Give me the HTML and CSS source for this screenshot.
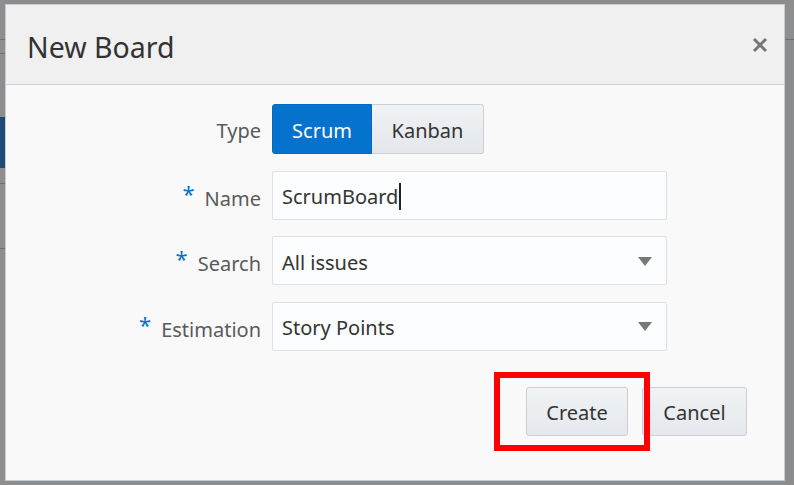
FILE: index.html
```html
<!DOCTYPE html>
<html>
<head>
<meta charset="utf-8">
<link rel="stylesheet" href="styles.css">
</head>
<body>
<div class="screen">
  <div class="strip strip-left">
    <div class="seg seg-a"></div>
    <div class="seg-line"></div>
    <div class="seg seg-b"></div>
    <div class="seg-line"></div>
    <div class="seg seg-c"></div>
    <div class="seg seg-blue"></div>
    <div class="seg seg-d"></div>
    <div class="seg-line"></div>
    <div class="seg seg-e"></div>
    <div class="seg-line"></div>
    <div class="seg seg-f"></div>
  </div>
  <div class="dialog-wrap">
    <div class="dialog">
      <div class="dialog-header">
        <h1 class="dialog-title">New Board</h1>
        <button class="close-btn" aria-label="Close">
          <svg width="16" height="16" viewBox="0 0 16 16"><path d="M2 2 L14 14 M14 2 L2 14" stroke="#767676" stroke-width="3" stroke-linecap="butt"/></svg>
        </button>
      </div>
      <div class="dialog-body">
        <div class="form">
          <div class="label">Type</div>
          <div class="seg-control">
            <button class="seg-btn seg-active">Scrum</button>
            <button class="seg-btn">Kanban</button>
          </div>

          <div class="label"><span class="req">*</span>Name</div>
          <div class="field"><span class="value">ScrumBoard</span><span class="caret"></span></div>

          <div class="label"><span class="req">*</span>Search</div>
          <div class="field select"><span class="value">All issues</span><span class="arrow"></span></div>

          <div class="label"><span class="req">*</span>Estimation</div>
          <div class="field select"><span class="value">Story Points</span><span class="arrow"></span></div>
        </div>
        <div class="footer">
          <div class="highlight-wrap">
            <button class="btn">Create</button>
            <div class="highlight"></div>
          </div>
          <button class="btn">Cancel</button>
        </div>
      </div>
    </div>
  </div>
  <div class="strip strip-right">
    <div class="seg seg-r1"></div>
    <div class="seg-line"></div>
  </div>
</div>
</body>
</html>
```
FILE: styles.css
```css
* { box-sizing: border-box; }
html, body { margin: 0; padding: 0; }
body {
  width: 794px;
  height: 485px;
  overflow: hidden;
  background: #8c8c8c;
  font-family: "Noto Sans", "Open Sans", sans-serif;
}
.screen {
  display: flex;
  width: 794px;
  height: 485px;
}
.strip {
  display: flex;
  flex-direction: column;
}
.strip-left { width: 5px; }
.strip-right { width: 9px; }
.seg { background: #8e8e8e; }
.seg-line { height: 1px; background: #6f6f6f; }
.seg-a { height: 39px; }
.seg-b { height: 13px; }
.seg-c { height: 63px; }
.seg-blue { height: 51px; background: #1d4a78; }
.seg-d { height: 15px; }
.seg-e { height: 64px; }
.seg-f { flex: 1; }
.seg-r1 { height: 39px; }

.dialog-wrap {
  width: 780px;
  padding: 4px 0 4px 0;
}
.dialog {
  height: 477px;
  border: 1px solid #c4ccd6;
  background: #f9f9f9;
  display: flex;
  flex-direction: column;
}
.dialog-header {
  height: 80px;
  background: #f0f0f0;
  border-bottom: 1px solid #c9d1db;
  display: flex;
  align-items: center;
  justify-content: space-between;
  padding: 4px 16px 0 21px;
}
.dialog-title {
  margin: 0;
  font-weight: 400;
  font-size: 28.5px;
  color: #333333;
  letter-spacing: 0;
}
.close-btn {
  border: 0;
  background: transparent;
  padding: 0;
  width: 16px;
  height: 16px;
  display: flex;
  margin-top: -4px;
}
.dialog-body {
  flex: 1;
  padding: 19px 37px 0 0;
  display: flex;
  flex-direction: column;
}
.form {
  display: grid;
  grid-template-columns: 255px 395px;
  grid-auto-rows: 49px;
  grid-template-rows: 50px;
  column-gap: 11px;
  row-gap: 16.5px;
  align-items: center;
}
.label {
  text-align: right;
  font-size: 20px;
  color: #5a5a5a;
  padding-top: 3px;
}
.req {
  color: #0a6fc7;
  font-size: 22px;
  position: relative;
  top: -4px;
  margin-right: 10px;
}
.seg-control {
  display: flex;
  height: 50px;
  align-self: stretch;
}
.seg-btn {
  font-family: inherit;
  font-size: 20px;
  height: 50px;
  border: 1px solid #c9d0d6;
  background: linear-gradient(#f0f2f4, #e3e7eb);
  color: #333;
  padding: 2px 0 0 0;
  width: 112px;
  border-radius: 0 3px 3px 0;
  border-left: 0;
}
.seg-active {
  width: 100px;
  background: #0572ce;
  border: 1px solid #0568bd;
  color: #ffffff;
  border-radius: 3px 0 0 3px;
}
.field {
  height: 49px;
  align-self: stretch;
  border: 1px solid #dde2e7;
  border-radius: 2px;
  background: #fcfdfe;
  display: flex;
  align-items: center;
  padding: 3px 14px 0 9px;
  font-size: 20px;
  color: #333333;
}
.caret {
  width: 1.5px;
  height: 27px;
  background: #222;
  margin-left: 1px;
}
.select { justify-content: space-between; }
.arrow {
  width: 0;
  height: 0;
  border-left: 7.5px solid transparent;
  border-right: 7.5px solid transparent;
  border-top: 9px solid #777777;
  margin-top: -2px;
}
.footer {
  display: flex;
  justify-content: flex-end;
  gap: 14px;
  margin-top: 36px;
}
.highlight-wrap {
  position: relative;
  display: flex;
}
.btn {
  font-family: inherit;
  font-size: 20px;
  height: 49px;
  color: #333333;
  border: 1px solid #c8cfd5;
  border-radius: 3px;
  background: linear-gradient(#f1f3f5, #e4e8ec);
  padding: 2px 0 0 0;
  width: 102px;
}
.footer > .btn { width: 105px; }
.highlight {
  position: absolute;
  left: -32px;
  top: -15px;
  width: 156px;
  height: 79px;
  border: 6px solid #ff0000;
  pointer-events: none;
}
```
